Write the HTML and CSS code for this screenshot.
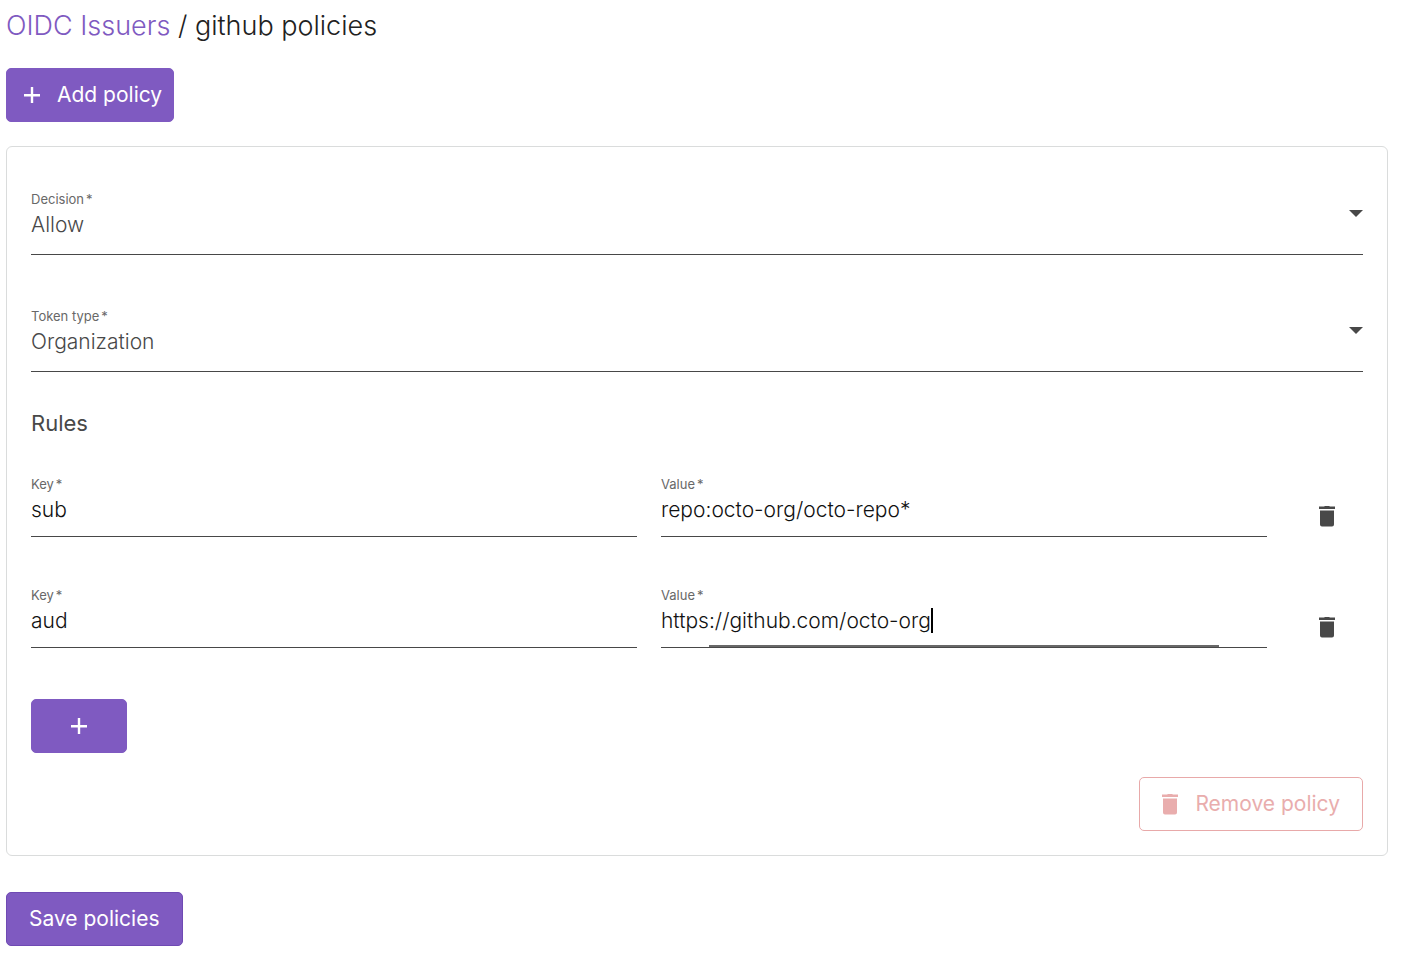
FILE: index.html
```html
<!DOCTYPE html>
<html lang="en">
<head>
<meta charset="utf-8">
<meta name="viewport" content="width=device-width, initial-scale=1">
<title>github policies</title>
<link rel="stylesheet" href="styles.css">
</head>
<body>
<svg class="sprite" aria-hidden="true">
  <symbol id="trash" viewBox="0 0 16 22"><path d="M5 1.500 6 1h4l1 .5h5V4H0V1.500zM1 5.500h14v14a2 2 0 0 1-2 2H3a2 2 0 0 1-2-2z"/></symbol>
  <symbol id="plus" viewBox="0 0 16 16"><path d="M6.800 0h2.400v7h6.800v2.400H9.200V16H6.800V9.400H0V7h6.800z"/></symbol>
</svg>
<main class="page">
  <h1 class="title"><a class="title-link" href="#issuers">OIDC Issuers</a> / github policies</h1>
  <button class="btn btn-add" type="button"><svg class="icon-plus" aria-hidden="true"><use href="#plus"/></svg>Add policy</button>

  <form class="form">
    <section class="card">
      <div class="field field-select">
        <label class="label" for="decision">Decision<span class="star">*</span></label>
        <select class="value value-select" id="decision"><option>Allow</option><option>Deny</option></select>
      </div>
      <div class="field field-select">
        <label class="label" for="token">Token type<span class="star">*</span></label>
        <select class="value value-select" id="token"><option>Organization</option><option>Personal</option></select>
      </div>

      <h2 class="subtitle">Rules</h2>
      <div class="rules">
        <div class="rule">
          <div class="field">
            <label class="label" for="key1">Key<span class="star">*</span></label>
            <input class="value" id="key1" type="text" value="sub">
          </div>
          <div class="field">
            <label class="label" for="value1">Value<span class="star">*</span></label>
            <input class="value" id="value1" type="text" value="repo:octo-org/octo-repo*">
          </div>
          <button class="icon-btn" type="button" aria-label="Delete rule"><svg class="icon-trash"><use href="#trash"/></svg></button>
        </div>
        <div class="rule">
          <div class="field">
            <label class="label" for="key2">Key<span class="star">*</span></label>
            <input class="value" id="key2" type="text" value="aud">
          </div>
          <div class="field field-active">
            <label class="label" for="value2">Value<span class="star">*</span></label>
            <div class="entry">
              <input class="value value-fit" id="value2" type="text" value="https://github.com/octo-org">
              <span class="caret"></span>
            </div>
          </div>
          <button class="icon-btn" type="button" aria-label="Delete rule"><svg class="icon-trash"><use href="#trash"/></svg></button>
        </div>
      </div>

      <button class="btn btn-plus" type="button" aria-label="Add rule"><svg class="icon-plus"><use href="#plus"/></svg></button>
      <div class="actions">
        <button class="btn btn-remove" type="button"><svg class="icon-trash" aria-hidden="true"><use href="#trash"/></svg>Remove policy</button>
      </div>
    </section>
    <button class="btn btn-save" type="button">Save policies</button>
  </form>
</main>
</body>
</html>
```
FILE: styles.css
```css
* { box-sizing: border-box; }
body {
  margin: 0;
  background: #fff;
  color: #212121;
  font-family: Inter, "Liberation Sans", sans-serif;
}
button, input, select { font: inherit; margin: 0; }
.sprite { position: absolute; width: 0; height: 0; }
.page { padding: 8px 14px 8px 6px; }
.title { margin: 0 0 24px; font-size: 27px; line-height: 36px; font-weight: 350; }
.title-link { color: #7f5ac1; text-decoration: none; }

.btn {
  display: inline-flex;
  align-items: center;
  justify-content: center;
  height: 54px;
  border: 1px solid #7f5ac1;
  border-radius: 5px;
  background: #7f5ac1;
  color: #fff;
  font-size: 21px;
  line-height: 24px;
  white-space: nowrap;
}
.btn-add { gap: 17px; padding: 0 11px 0 17px; }
.btn-plus { width: 96px; margin-top: 51px; }
.btn-save { margin-top: 36px; padding: 0 22px; border-color: #6f4ab3; }
.btn-remove { gap: 17px; padding: 0 22px; border-color: #e8a9a9; background: #fff; color: #e9adad; }
.icon-plus { width: 16px; height: 16px; fill: currentColor; }
.icon-trash { width: 16px; height: 22px; fill: currentColor; }

.form { margin-top: 24px; display: flex; flex-direction: column; align-items: flex-start; }
.card {
  align-self: stretch;
  padding: 24px;
  border: 1px solid #dadcdc;
  border-radius: 6px;
}
.field {
  position: relative;
  display: flex;
  flex-direction: column;
  min-width: 0;
  padding: 18px 0 12px;
  border-bottom: 1px solid #484848;
}
.field-select { padding-bottom: 15px; }
.field-select + .field-select { margin-top: 33px; }
.field-select::after {
  content: "";
  position: absolute;
  right: 0;
  top: 39px;
  border: 7px solid transparent;
  border-top-color: #484848;
  pointer-events: none;
}
.field-active::after {
  content: "";
  position: absolute;
  left: 8%;
  right: 8%;
  bottom: 0;
  height: 2px;
  background: #686868;
}
.label { color: #686868; font-size: 13px; line-height: 20px; }
.star { margin-left: 2px; }
.value {
  width: 100%;
  height: 30px;
  padding: 0;
  border: 0;
  outline: 0;
  background: transparent;
  color: #111;
  font-size: 21px;
  font-weight: 350;
}
.value-select { appearance: none; color: #484848; }
.entry { display: flex; align-items: center; }
.value-fit { width: auto; min-width: 0; field-sizing: content; }
.caret { width: 2px; height: 25px; background: #000; }

.subtitle { margin: 39px 0 21px; color: #484848; font-size: 22px; line-height: 24px; font-weight: 400; }
.rules { display: grid; gap: 30px; }
.rule { display: grid; grid-template-columns: 1fr 1fr 72px; gap: 24px; }
.icon-btn {
  display: flex;
  align-items: center;
  justify-content: center;
  padding: 39px 0 0;
  border: 0;
  background: none;
  color: #484848;
}
.actions { display: flex; justify-content: flex-end; margin-top: 24px; }
```
